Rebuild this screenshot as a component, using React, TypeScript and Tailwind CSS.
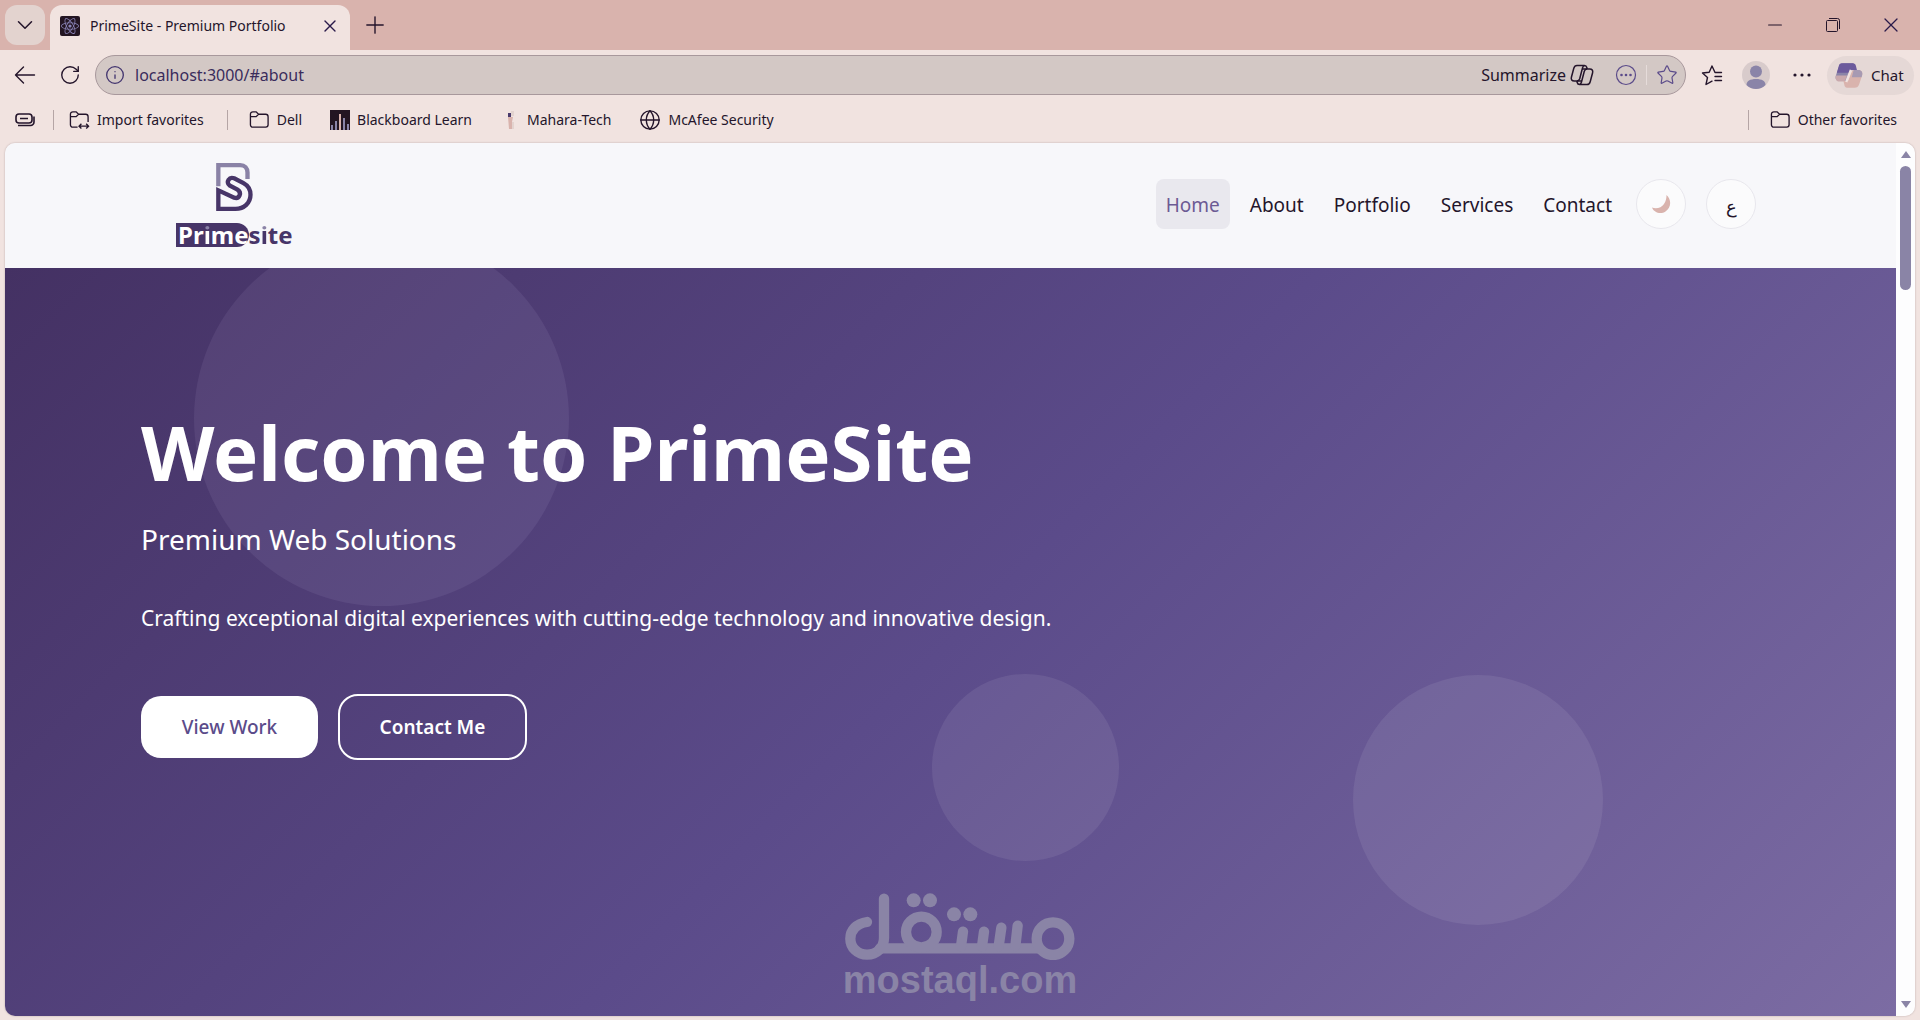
import type { ReactNode } from "react";
import { ChevronDown, Globe, Info, Minus, Plus, RotateCw, Star, X } from "lucide-react";
import { FaReact } from "react-icons/fa";

function FolderIcon({ transfer = false }: { transfer?: boolean }) {
  return (
    <svg width="21" height="20" viewBox="0 0 22 20" fill="none" stroke="currentColor" strokeWidth="1.4">
      {transfer ? (
        <path d="M9 17.5H4A2.5 2.5 0 0 1 1.500 15V4A2.500 2.500 0 0 1 4 1.500h3.500L10 4h7.500A2.500 2.500 0 0 1 20 6.500V12M1.500 6.500h6L10 4M10.500 16.500h10M13 14l-2.500 2.500L13 19M18 14l2.500 2.500L18 19" />
      ) : (
        <path d="M1.500 6.500V4A2.500 2.500 0 0 1 4 1.500h3.500L10 4h7.500A2.500 2.500 0 0 1 20 6.500V15a2.500 2.500 0 0 1-2.500 2.500H4A2.500 2.500 0 0 1 1.500 15V6.500h6L10 4" />
      )}
    </svg>
  );
}

function CopilotOutline() {
  return (
    <svg width="24" height="22" viewBox="0 0 24 22" fill="none" stroke="currentColor" strokeWidth="1.500" strokeLinejoin="round">
      <path d="M7 1.500h7.500c1.300 0 2 .8 2.300 2l.4 1.500M7 1.500C5.400 1.500 4.300 2.500 3.800 4.300l-2.400 9C.8 15.500 2 17 4.200 17H7c1.500 0 2.300-.8 2.700-2.200L12.500 4c.4-1.500 1-2.300 2-2.500" />
      <path d="M17 20.500H9.500c-1.300 0-2-.8-2.300-2L6.800 17M17 20.500c1.600 0 2.700-1 3.200-2.800l2.400-9C23.200 6.500 22 5 19.800 5H17c-1.500 0-2.300.8-2.700 2.200L11.500 18c-.4 1.500-1 2.300-2 2.500" />
      <path d="M12 5h5M7 17h5" />
    </svg>
  );
}

function CopilotColour() {
  return (
    <svg width="28" height="27" viewBox="0 0 30 28">
      <path d="M9 1h11l-6 16c-.7 2-2 3-4 3H5c-4 0-5-3-4-6L4 5c.8-2.600 2.400-4 5-4Z" fill="#8a84a8" />
      <path d="M7 1h12c2 0 3 1 3.500 3l1 4h-4c-2 0-3 1-3.500 3H2l2-7c.5-2 1.500-3 3-3Z" fill="#6c5a9c" />
      <path d="M1 14h12l-2 5c-.5 1-1 1.500-2 1.500H5c-3.500 0-5-2.500-4-6.500Z" fill="#c9a9ad" />
      <path d="M9 20h5l4-10c.6-1.500 1.500-2 3-2h4c3.500 0 5 2.500 4 6l-3 9c-1 3-2.500 4-5 4h-8c-2 0-2.700-1-3-3Z" fill="#d9b3ad" />
      <path d="M20 8h5c3.500 0 5 2.500 4 6l-.5 2H18l1.500-6Z" fill="#a79ab2" />
      <path d="M17 8l-5 13" stroke="#f1e3e0" strokeWidth="2.500" />
    </svg>
  );
}

function ToolbarButton({ label, children }: { label: string; children: ReactNode }) {
  return (
    <button type="button" aria-label={label} className="flex size-8 shrink-0 items-center justify-center">
      {children}
    </button>
  );
}

function TabStrip() {
  return (
    <div className="flex h-[50px] shrink-0 items-end bg-[#d9b3ad] pl-[5px]">
      <button type="button" aria-label="Tab actions" className="mb-[5px] flex size-10 items-center justify-center rounded-xl bg-[#e3d3cf]">
        <ChevronDown size={26} strokeWidth={1.400} />
      </button>
      <div className="ml-[5px] flex h-[45px] w-[300px] items-center rounded-t-xl bg-[#f1e3e0] pr-2 pb-1 pl-[10px]">
        <span className="flex size-5 items-center justify-center rounded-xs bg-[#231522] text-[#8a84b8]">
          <FaReact size={18} />
        </span>
        <span className="ml-[10px] flex-1 text-sm whitespace-nowrap">PrimeSite - Premium Portfolio</span>
        <button type="button" aria-label="Close tab" className="flex size-6 items-center justify-center text-[#2a1a4a]">
          <X size={20} strokeWidth={1.600} />
        </button>
      </div>
      <button type="button" aria-label="New tab" className="mb-[5px] ml-[5px] flex size-10 items-center justify-center">
        <Plus size={28} strokeWidth={1.200} />
      </button>
      <div className="ml-auto flex h-full items-center">
        <button type="button" aria-label="Minimize" className="flex h-full w-[58px] items-center justify-center">
          <Minus size={22} strokeWidth={1.200} />
        </button>
        <button type="button" aria-label="Restore" className="flex h-full w-[58px] items-center justify-center">
          <svg width="14" height="14" viewBox="0 0 14 14" fill="none" stroke="currentColor">
            <rect x="0.500" y="2.500" width="11" height="11" rx="1" />
            <path d="M3 .5h8.500a2 2 0 0 1 2 2V11" />
          </svg>
        </button>
        <button type="button" aria-label="Close window" className="flex h-full w-[58px] items-center justify-center text-[#2a1a4a]">
          <X size={24} strokeWidth={1.300} />
        </button>
      </div>
    </div>
  );
}

function Toolbar() {
  return (
    <div className="flex h-[50px] shrink-0 items-center pr-[6px] pl-[9px]">
      <ToolbarButton label="Back">
        <svg width="22" height="18" viewBox="0 0 22 18" fill="none" stroke="currentColor" strokeWidth="1.400" strokeLinecap="round" strokeLinejoin="round">
          <path d="M20.500 9H1.500M9.500 1l-8 8 8 8" />
        </svg>
      </ToolbarButton>
      <span className="w-[13px]" />
      <ToolbarButton label="Reload">
        <RotateCw size={22} strokeWidth={1.500} />
      </ToolbarButton>
      <div className="ml-[9px] flex h-10 flex-1 items-center rounded-full border border-[#a8989c] bg-[#d3c8c5] pr-[2px] pl-[9px] text-[#43356f]">
        <Info size={20} strokeWidth={1.600} />
        <input
          type="text"
          aria-label="Address"
          defaultValue="localhost:3000/#about"
          className="ml-[10px] min-w-0 flex-1 bg-transparent text-base text-[#3a2c5c] outline-none"
        />
        <button type="button" className="flex items-center gap-1 text-base text-[#24152b]">
          Summarize
          <CopilotOutline />
        </button>
        <span className="w-4" />
        <ToolbarButton label="More page actions">
          <svg width="22" height="22" viewBox="0 0 22 22" fill="none" stroke="#5b4b8a" strokeWidth="1.200">
            <circle cx="11" cy="11" r="9.500" />
            <g fill="#5b4b8a" stroke="none">
              <circle cx="6.500" cy="11" r="1.300" />
              <circle cx="11" cy="11" r="1.300" />
              <circle cx="15.500" cy="11" r="1.300" />
            </g>
          </svg>
        </ToolbarButton>
        <span className="ml-1 h-5 w-px bg-[#e6dcda]" />
        <span className="w-1" />
        <ToolbarButton label="Add to favorites">
          <Star size={22} strokeWidth={1.300} className="text-[#5b4b8a]" />
        </ToolbarButton>
      </div>
      <span className="w-[10px]" />
      <ToolbarButton label="Favorites">
        <svg width="22" height="21" viewBox="0 0 22 21" fill="none" stroke="currentColor" strokeWidth="1.400" strokeLinejoin="round" strokeLinecap="round">
          <path d="M20.500 7.500H14L11 1 8.200 7.300 1.500 8l5 4.500L5 19.500l6-3.300M14 11.500h6.500M14 15.500h6.500" />
        </svg>
      </ToolbarButton>
      <span className="w-[14px]" />
      <button type="button" aria-label="Profile" className="shrink-0">
        <svg width="28" height="28" viewBox="0 0 28 28">
          <circle cx="14" cy="14" r="14" fill="#d8cbcb" />
          <circle cx="14" cy="10.500" r="6" fill="#8a84a8" />
          <path d="M4.500 24c0-4 3.500-6 9.500-6s9.500 2 9.500 6c-2.500 2.600-5.800 4-9.500 4s-7-1.400-9.500-4Z" fill="#8a84a8" />
        </svg>
      </button>
      <span className="w-4" />
      <ToolbarButton label="Settings and more">
        <svg width="18" height="4" viewBox="0 0 18 4" fill="currentColor">
          <circle cx="2" cy="2" r="1.600" />
          <circle cx="9" cy="2" r="1.600" />
          <circle cx="16" cy="2" r="1.600" />
        </svg>
      </ToolbarButton>
      <button type="button" className="ml-[9px] flex h-[39px] w-[87px] items-center gap-2 rounded-full bg-[#e5d8d6] pl-2 text-[15px]">
        <CopilotColour />
        Chat
      </button>
    </div>
  );
}

function Bookmark({ icon, children }: { icon: ReactNode; children: ReactNode }) {
  return (
    <a href="#bookmark" className="flex items-center gap-[7px] text-sm whitespace-nowrap">
      {icon}
      {children}
    </a>
  );
}

function BookmarksBar() {
  return (
    <nav aria-label="Favorites bar" className="flex h-[43px] shrink-0 items-center pr-[23px] pb-1 pl-[15px]">
      <button type="button" aria-label="Collections">
        <svg width="20" height="14" viewBox="0 0 20 14" fill="none" stroke="currentColor" strokeWidth="1.600">
          <rect x="1" y="1" width="16" height="9" rx="3" />
          <path d="M5 5.500h8M3 12.500h12.500a3.500 3.500 0 0 0 3.500-3.500V3.500" />
        </svg>
      </button>
      <span className="mr-[15px] ml-[18px] h-5 w-px bg-[#b5a5a5]" />
      <Bookmark icon={<FolderIcon transfer />}>Import favorites</Bookmark>
      <span className="mr-[21px] ml-[23px] h-5 w-px bg-[#b5a5a5]" />
      <div className="flex items-center gap-7">
        <Bookmark icon={<FolderIcon />}>Dell</Bookmark>
        <Bookmark
          icon={
            <svg width="20" height="20" viewBox="0 0 20 20">
              <path fill="#231522" d="M0 0h20v20H0z" />
              <path fill="#8a84a8" d="M1 15h2v5H1zM5 11h2v9H5zM13 8h2v12h-2zM17 14h2v6h-2z" />
              <path fill="#d9b3ad" d="M9 4h2v16H9z" />
            </svg>
          }
        >
          Blackboard Learn
        </Bookmark>
        <Bookmark
          icon={
            <svg width="20" height="20" viewBox="0 0 20 20">
              <path fill="#d9b3ad" d="M8 7h5l-1 5v7H9z" />
              <path fill="#4a3a6c" d="M8 3h3v4H8z" />
              <path fill="#e3d3cf" d="M11 1h3v5h-3zM12 12h2v7h-2z" />
            </svg>
          }
        >
          Mahara-Tech
        </Bookmark>
        <Bookmark icon={<Globe size={22} strokeWidth={1.500} />}>McAfee Security</Bookmark>
      </div>
      <span className="mr-[21px] ml-auto h-5 w-px bg-[#b5a5a5]" />
      <Bookmark icon={<FolderIcon />}>Other favorites</Bookmark>
    </nav>
  );
}

function BrandLogo() {
  return (
    <a href="#home" aria-label="Primesite" className="flex w-[117px] flex-col items-center">
      <svg width="37" height="48" viewBox="0 0 110 144" fill="none" strokeWidth="13">
        <path d="M6.500 70V6.500H72c14 0 22 9 22 22V48" stroke="#8a82a6" />
        <path
          d="M6.500 137.500H58c26 0 45-18 45-42 0-16-8-28-21-35L54 46c-15-6-26 12-14 21l24 13c14 9 6 29-10 24L6.500 82Z"
          stroke="#473568"
        />
      </svg>
      <span className="mt-3 flex h-6 items-center self-start text-2xl leading-6 font-bold text-[#473568]">
        <span className="rounded-r-full bg-[#473568] pl-[2px] text-white">
          Pr
          <span className="bg-linear-to-b from-[#8a82a6] from-35% to-white to-35% bg-clip-text text-transparent">i</span>
          me
        </span>
        s
        <span className="bg-linear-to-b from-[#8a82a6] from-35% to-[#473568] to-35% bg-clip-text text-transparent">i</span>
        te
      </span>
    </a>
  );
}

const links = ["Home", "About", "Portfolio", "Services", "Contact"];

function SiteHeader() {
  return (
    <header className="flex h-[125px] shrink-0 items-start justify-between bg-[#f7f7fa] pt-5 pr-[140px] pl-[171px]">
      <BrandLogo />
      <div className="mt-4 flex items-center">
        <nav aria-label="Main" className="flex gap-[10px]">
          {links.map((link) => (
            <a
              key={link}
              href={"#" + link.toLowerCase()}
              className={
                link === "Home"
                  ? "flex h-[50px] items-center rounded-lg bg-[#e9e8ee] px-[10px] pt-[2px] text-[19px] text-[#6c5a94]"
                  : "flex h-[50px] items-center rounded-lg px-[10px] pt-[2px] text-[19px]"
              }
            >
              {link}
            </a>
          ))}
        </nav>
        <button type="button" aria-label="Dark mode" className="ml-[14px] flex size-[50px] items-center justify-center rounded-full border border-[#e8e7ed] bg-[#fbfbfc]">
          <svg width="20" height="20" viewBox="0 0 20 20">
            <path d="M15.500 1C21 6 20 14 14.500 17.500 10 20.500 3 19 1 13.500c4 1.500 9.500.5 12-3.500 2-3 2.500-6 2.500-9Z" fill="#d9b3ad" />
          </svg>
        </button>
        <button type="button" aria-label="العربية" className="ml-5 flex size-[50px] items-center justify-center rounded-full border border-[#e8e7ed] bg-[#fbfbfc] pt-1 text-lg">
          ع
        </button>
      </div>
    </header>
  );
}

function MostaqlMark() {
  return (
    <div className="absolute bottom-4 left-[840px] flex w-[230px] flex-col items-center text-[#8a84a6]">
      <svg width="230" height="67" viewBox="0 0 690 201" fill="none" stroke="currentColor" strokeWidth="31" strokeLinecap="round">
        <path d="M66 87C35 91 16 112 16 137c0 27 22 48 50 48 30 0 51-22 51-50V17" />
        <path d="M105 166h475" />
        <circle cx="229" cy="117" r="46" />
        <circle cx="624" cy="137" r="49" />
        <path d="M348 160l6-44M411 160l6-44M461 160l8-56M511 160l7-62" />
        <g fill="currentColor" stroke="none">
          <circle cx="206" cy="22" r="21" />
          <circle cx="255" cy="22" r="21" />
          <circle cx="327" cy="64" r="21" />
          <circle cx="376" cy="64" r="21" />
        </g>
      </svg>
      <span className="font-['Liberation_Sans',sans-serif] text-[38px] leading-10 font-bold">mostaql.com</span>
    </div>
  );
}

function Hero() {
  return (
    <section
      id="about"
      className="relative flex-1 overflow-hidden bg-linear-135 from-[#443163] via-[#5b4b8a] to-[#7c6ca3] px-34 pt-[134px] text-white"
    >
      <div className="absolute -top-[37px] left-[10%] size-[375px] rounded-full bg-[#e4dcff]/8" />
      <div className="absolute top-[406px] left-[49%] size-[187px] rounded-full bg-white/8" />
      <div className="absolute top-[407px] right-[15.5%] size-[250px] rounded-full bg-white/8" />
      <div className="relative">
        <h1 className="text-[76px] leading-[100px] font-bold">Welcome to PrimeSite</h1>
        <p className="mt-4 text-[28px] leading-[42px]">Premium Web Solutions</p>
        <p className="mt-[38px] text-[21px] leading-10">Crafting exceptional digital experiences with cutting-edge technology and innovative design.</p>
        <div className="mt-14 flex items-center gap-5">
          <button type="button" className="h-[62px] w-[177px] rounded-[20px] bg-white text-[19px] font-medium text-[#5b4b8a]">
            View Work
          </button>
          <button type="button" className="h-[66px] w-[189px] rounded-[20px] border-2 border-white text-[19px] font-semibold">
            Contact Me
          </button>
        </div>
      </div>
      <MostaqlMark />
    </section>
  );
}

function Scrollbar() {
  return (
    <div className="flex w-[19px] shrink-0 flex-col items-center bg-[#fdfdfe] py-2 text-[#8a84a6]">
      <svg width="10" height="8" viewBox="0 0 10 8" fill="currentColor">
        <path d="M5 0l5 7H0z" />
      </svg>
      <div className="mt-[7px] h-[124px] w-[11px] rounded-full bg-[#8a84a6]" />
      <svg className="mt-auto" width="10" height="8" viewBox="0 0 10 8" fill="currentColor">
        <path d="M5 8L0 1h10z" />
      </svg>
    </div>
  );
}

export default function App() {
  return (
    <div className="flex h-screen flex-col bg-[#f1e3e0] font-['Noto_Sans','Open_Sans',sans-serif] text-[#24152b]">
      <TabStrip />
      <Toolbar />
      <BookmarksBar />
      <div className="mr-[5px] mb-1 ml-[5px] flex min-h-0 flex-1 overflow-hidden rounded-[10px] shadow-[0_0_2px_#b5a5a5]">
        <main className="flex min-w-0 flex-1 flex-col">
          <SiteHeader />
          <Hero />
        </main>
        <Scrollbar />
      </div>
    </div>
  );
}
